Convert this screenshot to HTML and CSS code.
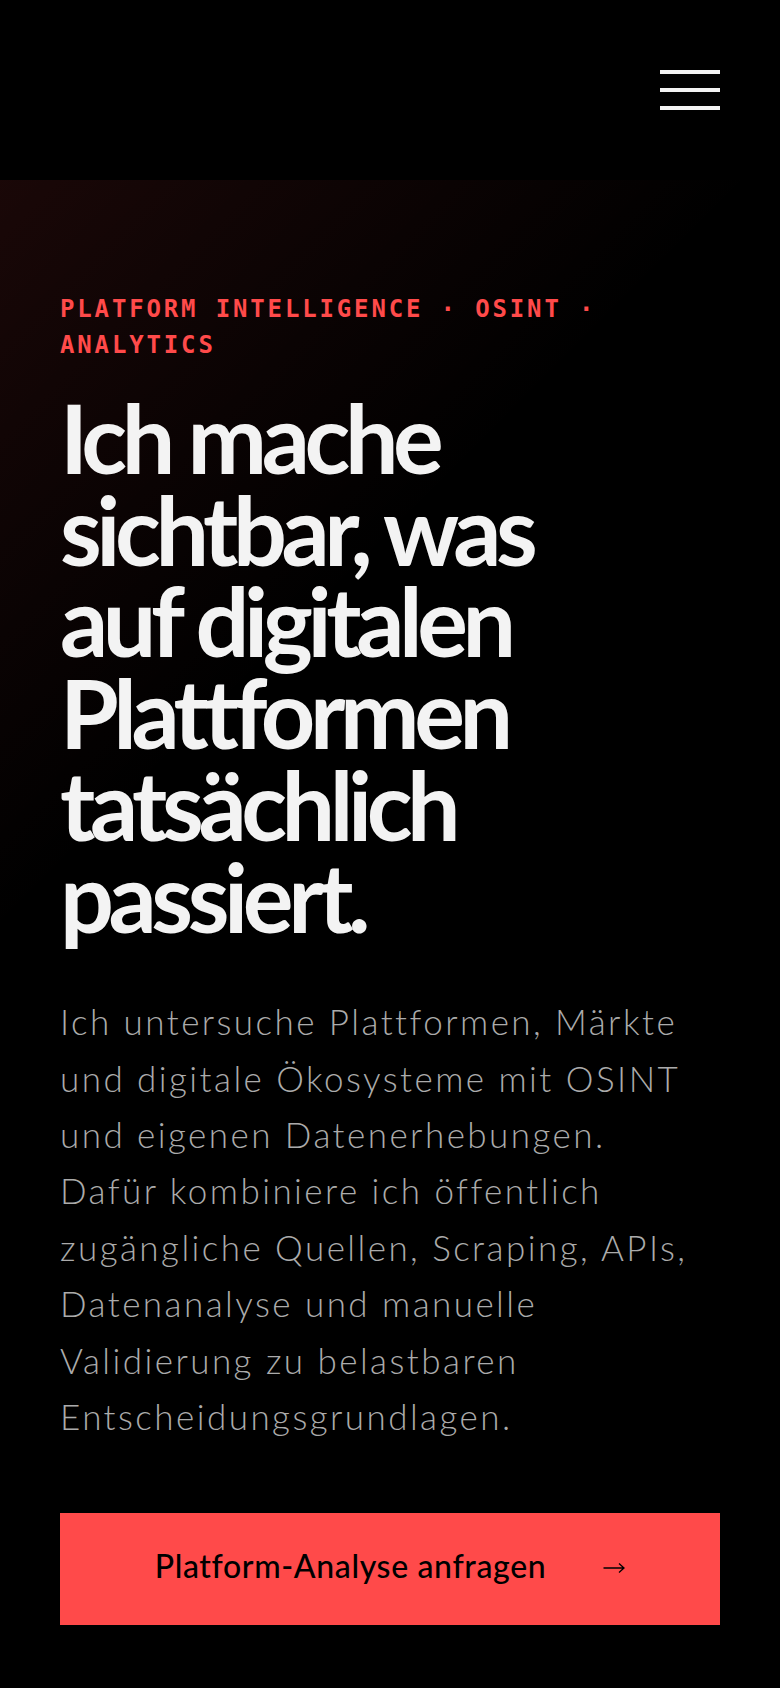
FILE: index.html
```html
<!DOCTYPE html>
<html lang="de">
<head>
<meta charset="utf-8">
<meta name="viewport" content="width=device-width, initial-scale=1">
<title>Platform Intelligence</title>
<link rel="stylesheet" href="styles.css">
</head>
<body>
<header class="site-header">
  <button class="menu-toggle" aria-label="Menü öffnen">
    <span class="menu-bar"></span>
    <span class="menu-bar"></span>
    <span class="menu-bar"></span>
  </button>
</header>
<main class="hero">
  <p class="eyebrow">PLATFORM INTELLIGENCE · OSINT · ANALYTICS</p>
  <h1 class="headline">Ich mache sichtbar, was auf digitalen Plattformen tatsächlich passiert.</h1>
  <p class="lead">Ich untersuche Plattformen, Märkte<br>und digitale Ökosysteme mit OSINT<br>und eigenen Datenerhebungen.<br>Dafür kombiniere ich öffentlich<br>zugängliche Quellen, Scraping, APIs,<br>Datenanalyse und manuelle<br>Validierung zu belastbaren<br>Entscheidungsgrundlagen.</p>
  <a class="cta" href="#kontakt">
    <span class="cta-label">Platform-Analyse anfragen</span>
    <svg class="cta-arrow" width="22" height="12" viewBox="0 0 22 12" aria-hidden="true">
      <path d="M0.5 6H21M16 1.5L21 6L16 10.5" fill="none" stroke="#000" stroke-width="1.3"/>
    </svg>
  </a>
</main>
</body>
</html>
```
FILE: styles.css
```css
* { box-sizing: border-box; }

html, body {
  margin: 0;
  padding: 0;
  background: #000;
}

body {
  font-family: "Lato", "Liberation Sans", sans-serif;
  color: #f2f2f2;
}

.site-header {
  height: 180px;
  padding: 0 60px;
  display: flex;
  align-items: center;
  justify-content: flex-end;
  background: #000;
}

.menu-toggle {
  width: 60px;
  height: 40px;
  padding: 0;
  border: 0;
  background: transparent;
  display: flex;
  flex-direction: column;
  justify-content: space-between;
  cursor: pointer;
}

.menu-bar {
  display: block;
  height: 4px;
  width: 100%;
  background: #f2f2f2;
}

.hero {
  min-height: 1508px;
  padding: 111px 60px 60px;
  background: linear-gradient(135deg, rgba(255, 74, 74, 0.1) 0%, rgba(255, 74, 74, 0) 33%), #000;
}

.eyebrow {
  margin: 0;
  font-family: "DejaVu Sans Mono", "Liberation Mono", monospace;
  font-weight: 700;
  font-size: 24px;
  line-height: 36px;
  letter-spacing: 2.85px;
  color: #ff4a4a;
}

.headline {
  margin: 29px 0 0;
  max-width: 560px;
  font-family: "Lato", "Liberation Sans", sans-serif;
  font-weight: 700;
  font-size: 95px;
  line-height: 91.7px;
  letter-spacing: -5.4px;
  color: #f3f3f3;
}

.lead {
  margin: 51px 0 0;
  font-family: "Lato", "Liberation Sans", sans-serif;
  font-weight: 300;
  font-size: 35px;
  line-height: 56.4px;
  letter-spacing: 2.45px;
  color: #ababab;
  white-space: nowrap;
}

.cta {
  margin-top: 69px;
  height: 112px;
  padding-bottom: 8px;
  display: flex;
  align-items: center;
  justify-content: center;
  gap: 57px;
  background: #ff4a4a;
  color: #000;
  text-decoration: none;
}

.cta-label {
  font-family: "Lato", "Liberation Sans", sans-serif;
  font-weight: 500;
  font-size: 32px;
  letter-spacing: 0.02em;
}

.cta-arrow {
  display: block;
  flex: none;
  margin-top: 6px;
}
```
